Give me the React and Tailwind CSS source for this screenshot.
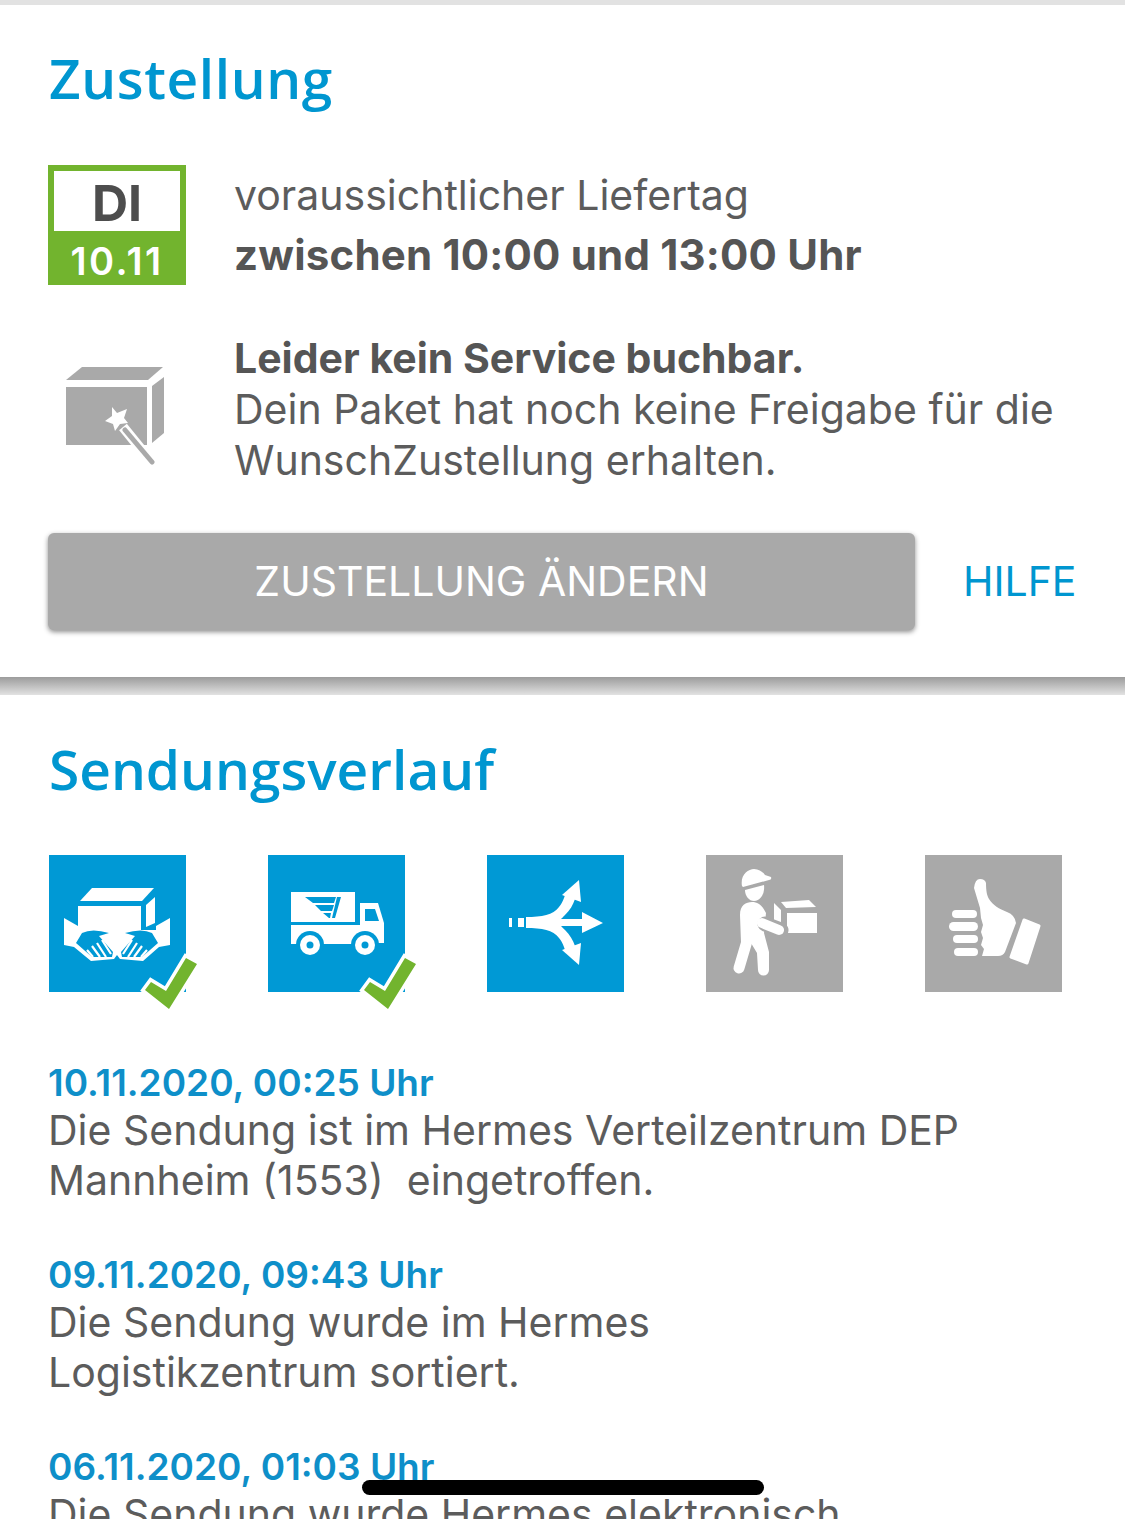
const events = [
  { date: '10.11.2020, 00:25 Uhr', lines: ['Die Sendung ist im Hermes Verteilzentrum DEP', 'Mannheim (1553)\u00a0 eingetroffen.'] },
  { date: '09.11.2020, 09:43 Uhr', lines: ['Die Sendung wurde im Hermes', 'Logistikzentrum sortiert.'] },
  { date: '06.11.2020, 01:03 Uhr', lines: ['Die Sendung wurde Hermes elektronisch'] },
]

function Check() {
  return (
    <polygon
      points="96,135 102,127 117,136 137,103 148,109 120,154"
      fill="#72b42e"
      stroke="#fff"
      strokeWidth="7"
      paintOrder="stroke"
    />
  )
}

function Tile({ color, children }) {
  return (
    <div className={`w-[137px] h-[137px] shrink-0 ${color}`}>
      <svg width="137" height="137" viewBox="0 0 137 137" className="overflow-visible block">
        {children}
      </svg>
    </div>
  )
}

function BoxIcon() {
  return (
    <Tile color="bg-[#0099d5]">
      <g fill="#fff">
        <polygon points="31,46 43,33 105,33 93,46" />
        <polygon points="97,50 106,42 106,68 97,72" />
        <polygon points="15,63 29,71 29,51 92,51 92,75 107,75 107,71 121,63 121,90 110,92 94,106 71,104 68,100 65,104 42,106 25,92 15,90" />
      </g>
      <path d="M27 88 L33 78 Q43 73 60 78 L50 81 L64 97 L63 102 L43 102 Z" fill="#0099d5" />
      <path d="M109 88 L103 78 Q93 73 76 78 L86 81 L72 97 L73 102 L93 102 Z" fill="#0099d5" />
      <path d="M38 95 L44 102 M43 91 L51 102 M48 88 L57 102 M53 85 L62 99 M98 95 L92 102 M93 91 L85 102 M88 88 L79 102 M83 85 L74 99" stroke="#fff" strokeWidth="2.2" fill="none" />
      <Check />
    </Tile>
  )
}

function TruckIcon() {
  return (
    <Tile color="bg-[#0099d5]">
      <g fill="#fff">
        <rect x="23" y="37" width="64" height="30" />
        <path d="M92 48 H110 L116 68 V88 H92 Z" />
        <path d="M23 70 H92 V89 H23 Z" />
      </g>
      <path d="M97 54 H107 L111 66 H97 Z" fill="#0099d5" />
      <path d="M37 42 H68 L66 48 H45 Z M47 50 H66 L64 56 H53 Z M55 58 H63 L62 63 H61 Z M69 42 H73 L67 63 H64 Z" fill="#0099d5" />
      <circle cx="42" cy="90" r="14" fill="#0099d5" />
      <circle cx="97" cy="90" r="14" fill="#0099d5" />
      <circle cx="42" cy="90" r="10" fill="#fff" />
      <circle cx="97" cy="90" r="10" fill="#fff" />
      <circle cx="42" cy="90" r="3.5" fill="#0099d5" />
      <circle cx="97" cy="90" r="3.5" fill="#0099d5" />
      <Check />
    </Tile>
  )
}

function SplitIcon() {
  return (
    <Tile color="bg-[#0099d5]">
      <g fill="#fff">
        <rect x="22" y="63" width="3" height="9" />
        <rect x="31" y="63" width="6" height="9" />
        <path d="M39 62 C55 62 66 60 72 52 C76 47 77 43 78 40 L88 44 C86 50 83 55 78 60 C76 62 75 63 74 64 H95 V57 L116 68 L95 78 V71 H74 C75 72 76 73 78 75 C83 80 86 85 88 91 L78 95 C77 92 76 88 72 83 C66 75 55 73 39 73 Z" />
        <polygon points="92,25 94,47 75,40" />
        <polygon points="92,110 94,88 75,95" />
      </g>
    </Tile>
  )
}

function PersonIcon() {
  return (
    <Tile color="bg-[#a9a9a9]">
      <g fill="#fff">
        <path d="M36 31 C34 20 42 14 48 14 C53 14 57 17 59 20 L65 22 Q66 25 63 25 L37 32 Z" />
        <path d="M39 35 L58 30 C59 38 55 46 48 46 C43 46 39 41 39 35 Z" />
        <path d="M34 60 C34 50 40 47 46 47 C52 47 56 50 60 58 L58 78 L63 97 V115 A5.5 5.5 0 0 1 52 115 L51 98 L45 88 L35 88 Z" />
        <polygon points="75,47 103,45 110,52 80,53" />
        <polygon points="68,48 75,55 75,69 68,66" />
        <rect x="81" y="58" width="30" height="20" />
      </g>
      <path d="M41 86 L33 113" stroke="#fff" strokeWidth="11" strokeLinecap="round" />
      <path d="M59 69 L75 75" stroke="#a9a9a9" strokeWidth="15" strokeLinecap="round" />
      <path d="M56 68 L73 75" stroke="#fff" strokeWidth="10" strokeLinecap="round" />
    </Tile>
  )
}

function ThumbIcon() {
  return (
    <Tile color="bg-[#a9a9a9]">
      <g fill="#fff">
        <rect x="27" y="55" width="25" height="8" rx="4" />
        <rect x="24" y="67" width="29" height="9" rx="4.5" />
        <rect x="28" y="80" width="25" height="8" rx="4" />
        <rect x="29" y="93" width="24" height="8" rx="4" />
        <path d="M49 33 Q50 24 55 24 Q60 24 61 28 C61 36 62 41 64 44 C68 50 74 54 82 57 Q90 60 91 68 L80 97 Q78 101 73 101 H57 L59 94 L56 90 L58 83 L56 77 L58 70 L56 63 L55 53 Z" />
        <polygon points="99,65 114,71 102,108 86,102" stroke="#fff" strokeWidth="3" strokeLinejoin="round" />
      </g>
    </Tile>
  )
}

function WandBoxIcon() {
  return (
    <svg width="100" height="100" viewBox="0 0 100 100" className="block">
      <polygon points="1,15 17,2 98,2 83,15" fill="#a9a9a9" />
      <rect x="1" y="22" width="81" height="58" fill="#a9a9a9" />
      <polygon points="87,21 99,12 99,68 87,78" fill="#a9a9a9" />
      <path d="M58 62 L88 99" stroke="#fff" strokeWidth="10" />
      <path d="M60 65 L87 97" stroke="#a9a9a9" strokeWidth="5" strokeLinecap="round" />
      <polygon points="47,42 52,48 62,44 59,53 63,58 55,59 50,66 48,59 40,56 47,51" fill="#fff" />
    </svg>
  )
}

export default function App() {
  const sans = "font-['Inter','Liberation_Sans',sans-serif]"
  const heading = "font-['Open_Sans','Noto_Sans',sans-serif]"

  return (
    <div className={`h-[1519px] overflow-hidden relative bg-white text-[#555] ${sans}`}>
      <div className="h-[5px] bg-[#e2e2e2]" />

      <div className="px-[48px]">
        <h2 className={`mt-[43px] pl-px text-[55px] leading-[60px] font-semibold tracking-[0.6px] text-[#0096d0] ${heading}`}>Zustellung</h2>

        <div className="mt-[57px] flex">
          <div className="w-[138px] h-[120px] shrink-0 bg-[#72b42e] p-[6px] pb-0 flex flex-col items-center">
            <div className="w-full h-[60px] bg-white text-[50px] leading-[64px] font-bold text-center text-[#4d4d4d]">DI</div>
            <div className="text-[38px] leading-[60px] font-semibold tracking-[2.4px] text-white">10.11</div>
          </div>
          <div className="ml-[48px]">
            <div className="text-[41px] leading-[60px] text-[#5c5c5c]">voraussichtlicher Liefertag</div>
            <div className="text-[42px] leading-[59px] font-bold tracking-[0.2px]">zwischen 10:00 und 13:00 Uhr</div>
          </div>
        </div>

        <div className="mt-[48px] flex">
          <div className="w-[138px] shrink-0 pl-[17px] pt-[32px]">
            <WandBoxIcon />
          </div>
          <div className="ml-[48px] text-[41px] leading-[51px] text-[#5c5c5c]">
            <div className="font-bold text-[#555]">Leider kein Service buchbar.</div>
            <div>Dein Paket hat noch keine Freigabe für die</div>
            <div>WunschZustellung erhalten.</div>
          </div>
        </div>

        <div className="mt-[47px] flex items-center">
          <button className="w-[867px] h-[97px] shrink-0 rounded-[6px] bg-[#a9a9a9] text-white text-[41px] shadow-[0_2px_5px_rgba(0,0,0,0.45)]">
            ZUSTELLUNG ÄNDERN
          </button>
          <span className="ml-[48px] text-[41px] text-[#0096d0]">HILFE</span>
        </div>
      </div>

      <div className="mt-[47px] h-[18px] bg-gradient-to-b from-[#9c9c9c] to-[#e2e2e2]" />

      <div className="px-[49px]">
        <h2 className={`mt-[44px] text-[55px] leading-[60px] font-semibold text-[#0096d0] ${heading}`}>Sendungsverlauf</h2>

        <div className="mt-[56px] flex gap-[82px]">
          <BoxIcon />
          <TruckIcon />
          <SplitIcon />
          <PersonIcon />
          <ThumbIcon />
        </div>

        <div className="mt-[68px] -ml-px flex flex-col gap-[47px]">
          {events.map(ev => (
            <div key={ev.date}>
              <div className="text-[37px] leading-[45px] font-semibold text-[#0e8fc9]">{ev.date}</div>
              {ev.lines.map(line => (
                <div key={line} className="text-[41px] leading-[50px] text-[#5c5c5c]">{line}</div>
              ))}
            </div>
          ))}
        </div>
      </div>

      <div className="absolute left-[362px] top-[1480px] w-[402px] h-[15px] rounded-full bg-black" />
    </div>
  )
}
